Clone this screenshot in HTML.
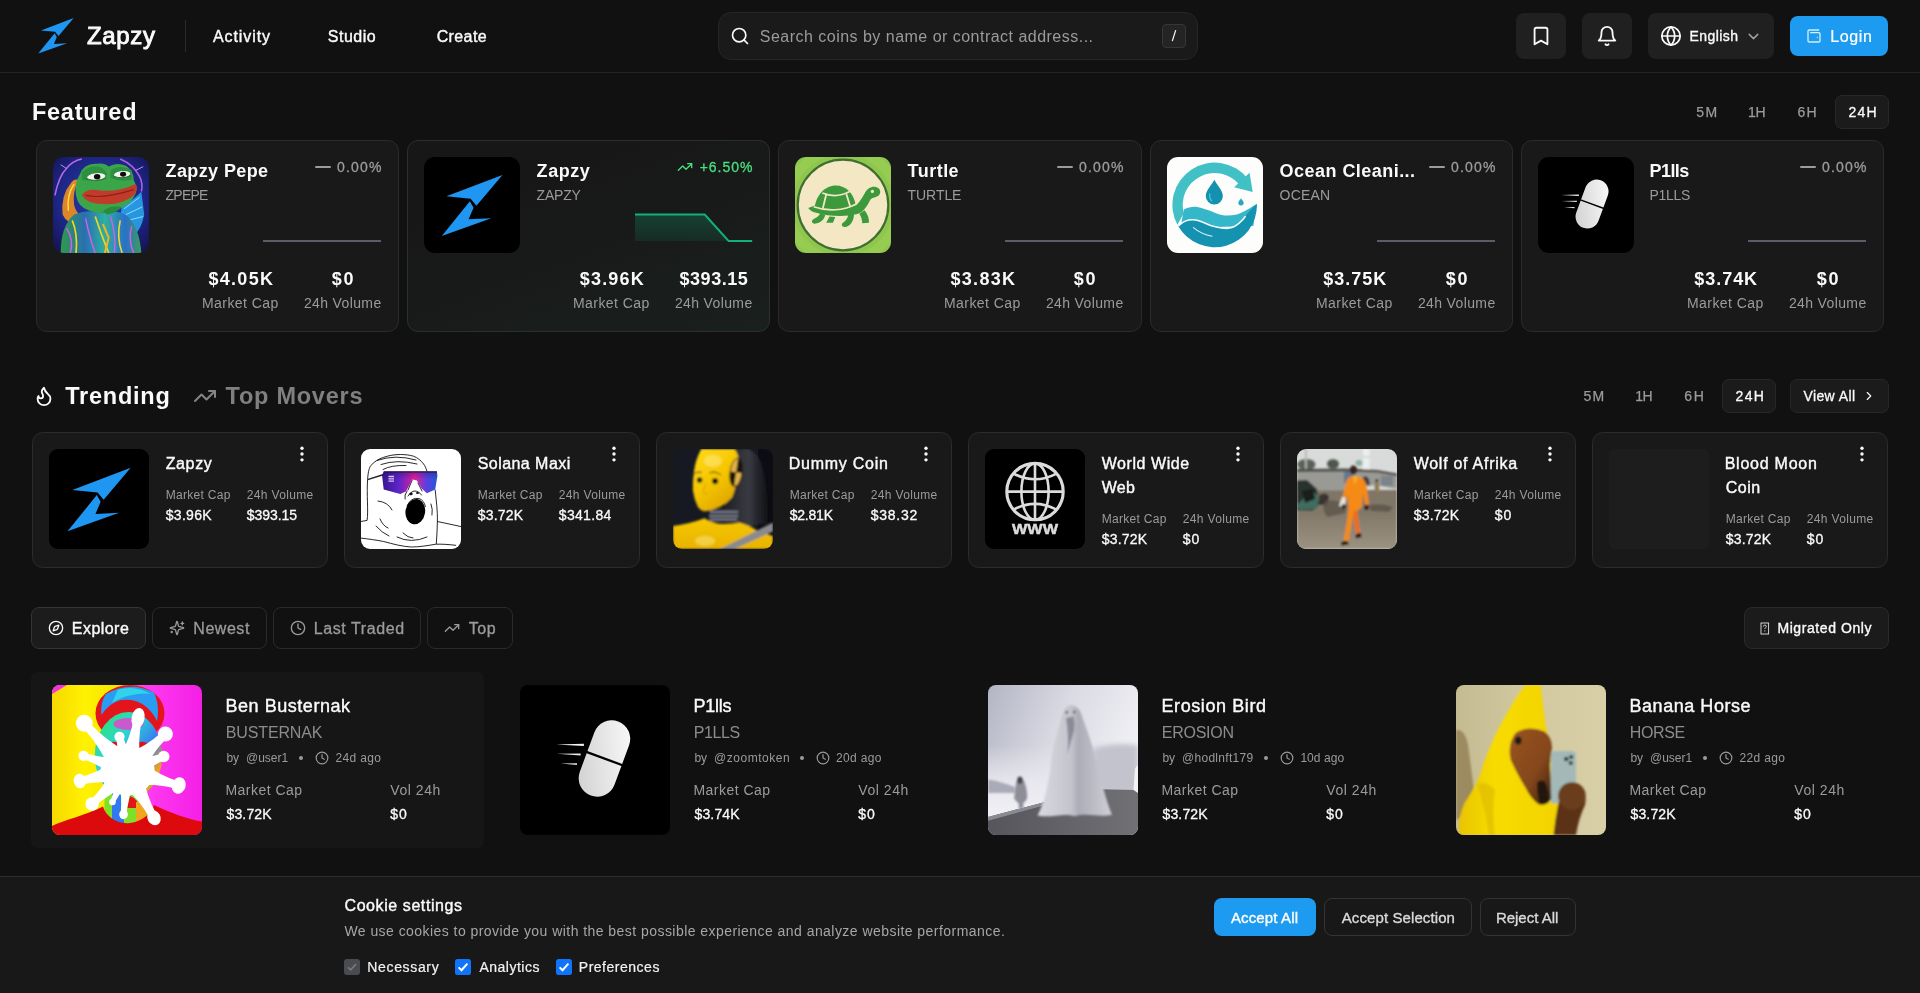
<!DOCTYPE html>
<html lang="en"><head>
<meta charset="utf-8">
<title>Zapzy</title>
<style>
*{box-sizing:border-box;margin:0;padding:0}
html,body{width:1920px;height:993px;overflow:hidden;background:#111111;color:#fafafa;will-change:transform;
  font-family:"Liberation Sans",sans-serif;-webkit-font-smoothing:antialiased}
.abs{position:absolute}
svg{display:block}
.ico{fill:none;stroke:currentColor;stroke-width:2;stroke-linecap:round;stroke-linejoin:round}
.t{position:absolute;white-space:nowrap;line-height:1}

/* ---------- header ---------- */
#hdr{position:absolute;left:0;top:0;width:1920px;height:73px;border-bottom:1px solid #232323;background:#111111}
.nav{font-size:16px;font-weight:400;color:#fafafa;-webkit-text-stroke:0.4px #fafafa}
#search{position:absolute;left:718px;top:12px;width:480px;height:48px;border-radius:13px;background:#1a1a1a;border:1px solid #262626}
#kbd{position:absolute;left:1162px;top:24px;width:24px;height:24px;border-radius:4px;background:#242424;border:1px solid #363636}
.hbtn{position:absolute;top:13px;height:46px;border-radius:8px;background:#202020}
#login{position:absolute;left:1790px;top:16px;width:98px;height:40px;border-radius:8px;background:#1d9bf0}

/* ---------- generic ---------- */
.card{position:absolute;background:#191919;border:1px solid #2b2b2b;border-radius:13px}
.muted{color:#9b9b9b}
.seg{font-size:14px;color:#9b9b9b;-webkit-text-stroke:0.25px #9b9b9b}
.segon{position:absolute;background:#1b1b1b;border:1px solid #272727;border-radius:7px}
</style>
</head>
<body>

<!-- ================= HEADER ================= -->
<svg width="0" height="0" style="position:absolute">
  <defs>
    <symbol id="bolt" viewBox="0 0 40 40">
      <polygon points="37.7,2 4.9,14.4 19.1,15.8 22.5,19.9" fill="#1e96f2"></polygon>
      <polygon points="18.65,17.3 2.2,37.6 31.2,27.2 17.9,27.9 20.8,21.1" fill="#1e96f2"></polygon>
    </symbol>
    <symbol id="clock" viewBox="0 0 24 24"><circle cx="12" cy="12" r="10"></circle><polyline points="12 6 12 12 16 14"></polyline></symbol>
    <symbol id="trend" viewBox="0 0 24 24"><polyline points="22 7 13.5 15.5 8.5 10.5 2 17"></polyline><polyline points="16 7 22 7 22 13"></polyline></symbol>
    <symbol id="dots" viewBox="0 0 24 24"><circle cx="12" cy="5" r="2.05" fill="currentColor" stroke="none"></circle><circle cx="12" cy="12" r="2.05" fill="currentColor" stroke="none"></circle><circle cx="12" cy="19" r="2.05" fill="currentColor" stroke="none"></circle></symbol>
    <linearGradient id="g-pill" x1="1" y1="0" x2="0" y2="1"><stop offset="0" stop-color="#fbfbfb"></stop><stop offset="1" stop-color="#cfcfcf"></stop></linearGradient>
    <linearGradient id="g-glass" x1="0" y1="0" x2="1" y2="0"><stop offset="0" stop-color="#3a1590"></stop><stop offset="0.3" stop-color="#5b25c8"></stop><stop offset="0.6" stop-color="#e0219f"></stop><stop offset="0.8" stop-color="#5a3fe0"></stop><stop offset="1" stop-color="#2458d8"></stop></linearGradient>
    <linearGradient id="g-glassv" x1="0" y1="0" x2="0" y2="1"><stop offset="0" stop-color="#15083a" stop-opacity="0.3"></stop><stop offset="0.35" stop-color="#15083a" stop-opacity="0"></stop></linearGradient>

    <symbol id="th-bolt" viewBox="0 0 100 100"><rect width="100" height="100" fill="#000"></rect><g transform="translate(14.6 15.3) scale(1.78)"><polygon points="37.7,2 4.9,14.4 19.1,15.8 22.5,19.9" fill="#1e96f2"></polygon><polygon points="18.65,17.3 2.2,37.6 31.2,27.2 17.9,27.9 20.8,21.1" fill="#1e96f2"></polygon></g></symbol>

    <symbol id="th-pills" viewBox="0 0 100 100"><rect width="100" height="100" fill="#000"></rect>
      <g transform="rotate(20.2 56.3 49)"><rect x="43.95" y="22.65" width="24.7" height="52.7" rx="12.35" fill="url(#g-pill)"></rect><rect x="42" y="48.3" width="29" height="1.5" fill="#000"></rect></g>
      <path d="M24.100 39.700L42.600 39.100L42.600 40.600Z" fill="#f4f4f4"></path><path d="M24.400 45.900L40.400 45.600L40.400 47Z" fill="#eaeaea"></path><path d="M27.100 52.300L38 52.100L38 53.400Z" fill="#e0e0e0"></path>
    </symbol>

    <symbol id="th-www" viewBox="0 0 100 100"><rect width="100" height="100" fill="#000"></rect>
      <g fill="none" stroke="#dcdcdc" stroke-width="3.100">
        <circle cx="50" cy="42.600" r="28.200"></circle><ellipse cx="50" cy="42.600" rx="13.600" ry="28.200" stroke-width="2.600"></ellipse>
        <path d="M50 14.400V70.800M21.800 42.600H78.200" stroke-width="2.600"></path>
        <path d="M29 24.800Q50 35.800 71 24.800M29 60.400Q50 49.400 71 60.400" stroke-width="2.600"></path>
      </g>
      <text x="50" y="85.300" text-anchor="middle" font-family="Liberation Sans, sans-serif" font-weight="700" font-size="14.800" fill="#dcdcdc" stroke="#dcdcdc" stroke-width="0.500" textLength="46" lengthAdjust="spacingAndGlyphs">WWW</text>
    </symbol>

    <symbol id="th-ocean" viewBox="0 0 100 100"><rect width="100" height="100" fill="#fdfdfc"></rect>
      <path d="M10.850 70.660A44 44 0 0 1 84.400 22.900L75.900 29.500A33.300 33.300 0 0 0 17.500 58.600Z" fill="#41c1c6"></path>
      <path d="M86 16.500L89.300 36.500L69.900 31.500Z" fill="#41c1c6"></path>
      <path d="M17.600 54.800C22 52 27 51.500 31.500 52C36 52.800 40.500 54.500 44.800 56C49 57.800 53 59.600 57 60.400C62 61.300 67.500 61 72.600 59.800C76.500 58.800 80.500 56.800 83.800 54.800C87 53 90.500 50.500 93.200 49.300L90 72L14 74Z" fill="#36b6c9"></path>
      <path d="M11.600 72C16 68 21.500 65.200 27 65.400C32 65.600 36.500 67.500 41 69.500C44 70.800 47 72 50.400 72.600C55 73.800 59.500 74.600 63.700 74.300C69 73.800 74 70.800 78.200 66C82 61.500 87 54.500 93.200 49.300L93.700 49A44 44 0 0 1 11.600 72Z" fill="#1692b1"></path>
      <path d="M12.500 71.300C16.500 67.500 21.500 65.200 27 65.400C32 65.600 36.500 67.500 41 69.500C44 70.800 47 72 50.400 72.600C55 73.800 59.500 74.600 63.700 74.300C69 73.800 74 70.800 78.200 66C79.300 64.800 80.400 63.500 81.500 62" fill="none" stroke="#f2fbfc" stroke-width="1.600" stroke-linecap="round"></path>
      <path d="M27.500 73.500Q36 80.500 47 82.500" fill="none" stroke="#d8f3f6" stroke-width="1.100" stroke-linecap="round"></path>
      <path d="M49.300 23.700C52 29 58.200 35 58.200 40.600A8.900 8.900 0 0 1 40.400 40.600C40.400 35 46.600 29 49.300 23.700Z" fill="#1391ae"></path>
      <path d="M44.500 38.500Q44 43.500 46.500 45.500" fill="none" stroke="#45c3d3" stroke-width="1.400" stroke-linecap="round"></path>
      <path d="M77.100 43C78 44.800 79.900 46.200 79.900 47.600A2.800 2.800 0 0 1 74.300 47.600C74.300 46.200 76.200 44.800 77.100 43Z" fill="#2ba8bc"></path>
    </symbol>

    <symbol id="th-turtle" viewBox="0 0 100 100"><rect width="100" height="100" fill="#8fc64d"></rect>
      <circle cx="50" cy="50" r="58" fill="none" stroke="#9dd058" stroke-width="10" opacity="0.600"></circle>
      <circle cx="50" cy="50" r="47.200" fill="#f3e7c4" stroke="#3f6e31" stroke-width="2.300"></circle>
      <g fill="#3c9a3c">
        <path d="M20.500 52.600C22 40 31 29.800 42.600 29.800C53 29.800 61 38 63 49.300C50 56 34 56.500 20.500 52.600Z"></path>
        <path d="M13.700 53.200L21 50.500C35 56 52 55.500 64 50C68 46 70 42 72.500 38C75 33 80 30 85 31.500C89.500 33 90 38 86.500 40.500C83 42.500 80 42 78.500 44.500C75.500 50 72 57 65 59.500C52 62.500 35 62 22 58C18 57.500 15.500 55.500 13.700 53.200Z"></path>
        <path d="M26.500 58.500L31.500 60.500C30.500 65 27 69 20.500 69.500C17 69 17 66 19.500 64.500C23 63 25 61 26.500 58.500Z"></path>
        <path d="M36 62L42 62.500L39.500 68.500L32.500 68.500Z"></path>
        <path d="M55.500 60L61.500 58.500C61.500 66 58 72.500 51.500 73C48.500 72.500 48 70 50 68.500C53.500 66.500 55 63.500 55.500 60Z"></path>
        <path d="M67 59L72.500 55.500C75.500 59.500 77.500 64 77 68.500L70 69C70 65.500 69 62 67 59Z"></path>
      </g>
      <g fill="none" stroke="#f3e7c4" stroke-width="1.900">
        <path d="M28.500 37.500Q42.600 43.500 57 36"></path><path d="M32.500 39L29 53.500M53.500 38.500L57.500 51.500"></path><path d="M19.500 51.800C33 56.800 51 56.300 63.600 48.800" stroke-width="1.700"></path>
      </g>
      <circle cx="80.600" cy="35.900" r="1.700" fill="#f3e7c4"></circle>
    </symbol>

    <symbol id="th-wojak" viewBox="0 0 100 100"><rect width="100" height="100" fill="#fff"></rect>
      <g fill="none" stroke="#111" stroke-width="0.900" stroke-linecap="round" stroke-linejoin="round">
        <path d="M0 72.500L6.100 71.400C7.500 62 5.500 45 6.600 30.500C7 24 8 19.500 9.400 17.200C13 12.500 17.500 10 22.700 8.300C28 6.500 33.500 5.500 39.300 5.500C44 5.500 48.500 6 52.600 7.200C56.500 8.800 60 11.500 62.600 15C64 17 65 19 65.900 22"></path>
        <path d="M74.200 41C75 50 76.800 62 76.400 72.500C76.300 80 75.800 88 75.300 94.700"></path>
        <path d="M76.400 72.500L99.700 77.500"></path>
        <path d="M0 89.100C8 90 15 91 22.700 92.500C32 95 41 97.500 50.400 98C59 98 67 96.500 74.800 95.200C82 95 88 95.500 94.700 96.300"></path>
        <path d="M16 11.500Q34 5 55 11M20 15.500Q36 10 56 15M22 20.500Q30 16 45 16.500"></path>
        <path d="M17 52Q27 53 31 61M19 70Q22 77 27 79M15 77Q21 84 28 87"></path>
        <path d="M36 88Q50 95 66 88M42 84Q47 89 52 89"></path>
        <path d="M70 55Q72 60 71 66"></path>
        <path d="M47 47Q49 43 53 42Q58 42 60.500 46M44 50Q43 46 46 42"></path>
        <path d="M51 31.500L47 41M57 34L61 42"></path>
      </g>
      <ellipse cx="50" cy="45" rx="1.800" ry="1.200" fill="#111" transform="rotate(-20 50 45)"></ellipse><ellipse cx="56.500" cy="44" rx="1.500" ry="1.100" fill="#111"></ellipse>
      <path d="M6.600 30.700L22.700 25.500" stroke="#222" stroke-width="1.400" fill="none"></path>
      <path d="M21 26L22.700 22.700L75.900 22.700L76.400 27.100L74.200 40.400L65.900 44.300L60.400 39.300L55.900 31.600L51.500 30.500L44.900 42.600L39.300 44.900L22.700 40.400Z" fill="url(#g-glass)"></path>
      <path d="M21 26L22.700 22.700L75.900 22.700L76.400 27.100L74.200 40.400L65.900 44.300L60.400 39.300L55.900 31.600L51.500 30.500L44.900 42.600L39.300 44.900L22.700 40.400Z" fill="url(#g-glassv)"></path>
      <path d="M22.700 22.900L75.900 22.900" stroke="#241046" stroke-width="1.100"></path>
      <path d="M27.500 27.500h5.500M27.500 29.800h5.500M27.500 32.100h5.500" stroke="#d7c6f3" stroke-width="1.300"></path>
      <ellipse cx="54.300" cy="62.600" rx="9.800" ry="12.700" fill="#000" transform="rotate(8 54.300 62.600)"></ellipse>
      <path d="M46 57Q50 48 58 49.500Q63 51 64.500 58" fill="none" stroke="#111" stroke-width="0.900"></path>
    </symbol>

    <symbol id="th-blank" viewBox="0 0 100 100"><rect width="100" height="100" fill="#1d1d1d"></rect></symbol>

    <filter id="b1" x="-10%" y="-10%" width="120%" height="120%"><feGaussianBlur stdDeviation="0.8"></feGaussianBlur></filter>
    <filter id="b2" x="-10%" y="-10%" width="120%" height="120%"><feGaussianBlur stdDeviation="1.6"></feGaussianBlur></filter>
    <filter id="b3" x="-20%" y="-20%" width="140%" height="140%"><feGaussianBlur stdDeviation="3"></feGaussianBlur></filter>

    <linearGradient id="g-benbg" x1="0" y1="0" x2="1" y2="0"><stop offset="0" stop-color="#f7d800"></stop><stop offset="0.22" stop-color="#fff200"></stop><stop offset="0.42" stop-color="#f6e400"></stop><stop offset="0.62" stop-color="#ff3cf0"></stop><stop offset="1" stop-color="#f41fe6"></stop></linearGradient>
    <linearGradient id="g-face" x1="0" y1="0" x2="1" y2="1"><stop offset="0" stop-color="#2ce65a"></stop><stop offset="0.35" stop-color="#2bd6d0"></stop><stop offset="0.6" stop-color="#3a7cf0"></stop><stop offset="0.8" stop-color="#f0a020"></stop><stop offset="1" stop-color="#30e050"></stop></linearGradient>
    <symbol id="th-ben" viewBox="0 0 100 100"><rect width="100" height="100" fill="url(#g-benbg)"></rect>
      <path d="M0 0H10L0 6Z" fill="#f62fe8"></path>
      <ellipse cx="52" cy="19" rx="23" ry="19" fill="#e4141c"></ellipse>
      <path d="M36 6Q52 -3 68 5Q72 14 70 24Q62 8 46 10Q38 12 33 20Q32 12 36 6Z" fill="#2a9cf2"></path>
      <path d="M44 3Q56 0 66 6Q60 5 52 7Q46 8 40 12Z" fill="#2fd4ea"></path>
      <ellipse cx="51" cy="47" rx="22.500" ry="29" fill="url(#g-face)"></ellipse>
      <ellipse cx="41" cy="40" rx="4" ry="2.200" fill="#d8141c"></ellipse><ellipse cx="60" cy="40" rx="4" ry="2.200" fill="#d8141c"></ellipse>
      <ellipse cx="51" cy="26" rx="10" ry="4" fill="#f23ad0" opacity="0.800"></ellipse>
      <rect x="35" y="70" width="30" height="24" rx="8" fill="#7fe02a"></rect>
      <path d="M40 72h8v20h-8z" fill="#2f7af0"></path><path d="M52 74Q58 76 57 82L50 82Z" fill="#e3141c"></path><path d="M56 78h7v14h-7z" fill="#f2a61e"></path>
      <path d="M0 94C8 90 22 87 34 81C36 88 44 93 52 92C60 91 66 86 68 80C78 85 92 90 100 91V100H0Z" fill="#dc0a0c"></path>
      <g fill="#fff">
        <ellipse cx="50.4" cy="56.8" rx="18" ry="16.800"></ellipse>
        <path d="M48.4 43.6Q36.3 37.2 25.4 25.7L21.4 29.4Q31.9 41.2 37.4 53.8Z"></path>
        <circle cx="21.5" cy="25.5" r="5.6"></circle>
        <path d="M58.5 47.2Q57.4 36.7 59.5 24.6L54.4 23.6Q51.7 35.6 46.7 44.8Z"></path>
        <ellipse cx="57.4" cy="22.0" rx="4.3" ry="6.8" transform="rotate(11 57.4 22.0)"></ellipse>
        <path d="M52.2 45.0Q49.4 41.0 47.7 35.6L43.1 36.7Q44.1 42.3 43.4 47.2Z"></path>
        <circle cx="45.0" cy="34.5" r="3.4"></circle>
        <path d="M63.2 54.3Q67.4 44.7 75.7 36.4L71.9 32.5Q63.2 40.4 53.5 44.1Z"></path>
        <circle cx="75.6" cy="32.7" r="5.0"></circle>
        <path d="M62.6 58.1Q67.1 53.4 73.6 50.6L71.9 46.1Q65.2 48.3 58.7 47.8Z"></path>
        <circle cx="74.5" cy="47.7" r="3.8"></circle>
        <path d="M58.9 66.7Q69.7 65.7 81.5 68.9L83.1 63.8Q71.4 60.0 62.9 53.2Z"></path>
        <ellipse cx="84.5" cy="67.0" rx="5.6" ry="4.6" transform="rotate(107 84.5 67.0)"></ellipse>
        <path d="M41.7 48.2Q32.9 48.5 23.3 45.6L21.9 49.8Q31.4 53.2 38.2 58.6Z"></path>
        <circle cx="21.0" cy="47.2" r="3.4"></circle>
        <path d="M38.2 52.9Q30.4 58.4 19.9 61.1L21.0 66.0Q31.6 63.9 41.1 65.6Z"></path>
        <ellipse cx="18.5" cy="64.0" rx="4.8" ry="4.0" transform="rotate(257 18.5 64.0)"></ellipse>
        <path d="M38.0 59.7Q34.1 68.3 26.5 76.0L30.1 79.7Q38.1 72.5 46.9 69.1Z"></path>
        <circle cx="26.7" cy="79.4" r="4.5"></circle>
        <path d="M45.4 67.4Q46.5 75.2 45.9 84.7L49.7 85.0Q50.9 75.7 53.4 68.1Z"></path>
        <ellipse cx="47.7" cy="86.3" rx="2.9" ry="3.2" transform="rotate(185 47.7 86.3)"></ellipse>
        <path d="M50.1 69.6Q58.3 76.9 64.7 87.9L69.2 85.4Q63.3 74.1 61.4 63.3Z"></path>
        <ellipse cx="68.0" cy="88.5" rx="4.3" ry="5.2" transform="rotate(151 68.0 88.5)"></ellipse>
        <path d="M42.5 65.2Q41.8 70.5 39.3 76.3L42.2 77.7Q45.2 72.2 48.8 68.2Z"></path>
        <circle cx="40.3" cy="78.0" r="2.2"></circle>
      </g>
    </symbol>

    <linearGradient id="g-sky" x1="0" y1="0" x2="1" y2="0.4"><stop offset="0" stop-color="#b4b5c4"></stop><stop offset="0.5" stop-color="#d9dae3"></stop><stop offset="1" stop-color="#f1f1f5"></stop></linearGradient>
    <linearGradient id="g-fog" x1="0" y1="0" x2="0" y2="1"><stop offset="0" stop-color="#e9e9ef" stop-opacity="0"></stop><stop offset="0.5" stop-color="#e9e9ef" stop-opacity="0.9"></stop><stop offset="1" stop-color="#f2f2f6"></stop></linearGradient>
    <linearGradient id="g-ground" x1="0" y1="0" x2="1" y2="0"><stop offset="0" stop-color="#55555b"></stop><stop offset="1" stop-color="#707075"></stop></linearGradient>
    <linearGradient id="g-ghost" x1="0" y1="0" x2="1" y2="0"><stop offset="0" stop-color="#d9d9e0"></stop><stop offset="0.45" stop-color="#c4c4cd"></stop><stop offset="0.55" stop-color="#adadb9"></stop><stop offset="1" stop-color="#cfcfd7"></stop></linearGradient>
    <symbol id="th-bird" viewBox="0 0 100 100"><rect width="100" height="100" fill="url(#g-sky)"></rect>
      <rect y="40" width="100" height="50" fill="url(#g-fog)"></rect>
      <path d="M70 42Q85 38 100 40V72H72Z" fill="#c3c3ce" filter="url(#b2)"></path>
      <path d="M0 63Q8 64 18 68L18 72L0 72Z" fill="#a9abb8" filter="url(#b1)"></path>
      <path d="M0 88L38 78L40 86L75 69.500L100 70V100H0Z" fill="url(#g-ground)"></path>
      <path d="M0 88L38 78L38.500 80L0 90.500Z" fill="#8a8a92"></path>
      <g filter="url(#b1)">
        <path d="M55.200 13.500C60 13.500 62 18 63.500 23C67 33 72 46 74 58C77 70 80 80 82.600 86.500C74 88.500 66 85 58 87.500C50 85 42 89 33 87C37 80 39 70 41 60C42 47 45 35 48 25C49.500 19 51 13.500 55.200 13.500Z" fill="url(#g-ghost)"></path>
        <path d="M52 22Q54 34 53 46Q55 38 57.500 30Q58 25 57 21Z" fill="#8b8b98"></path>
        <circle cx="52.500" cy="18.200" r="0.900" fill="#4c4c55"></circle><circle cx="57.500" cy="18" r="0.900" fill="#4c4c55"></circle>
      </g>
      <g filter="url(#b1)"><path d="M19 64Q22 61 24 64Q26.500 70 26 76L23.500 79V82.500H20.500V79L17.500 76Q17.500 70 19 64Z" fill="#8e8e99"></path><ellipse cx="21.300" cy="63.500" rx="1.800" ry="2.500" fill="#45454d"></ellipse></g>
      <path d="M98 56L100 53V72L97 70Z" fill="#f3f3f6"></path>
    </symbol>

    <linearGradient id="g-wall" x1="0" y1="0" x2="1" y2="0"><stop offset="0" stop-color="#c5bb92"></stop><stop offset="0.5" stop-color="#d3c9a1"></stop><stop offset="1" stop-color="#d9cfa6"></stop></linearGradient>
    <linearGradient id="g-ban" x1="0" y1="0" x2="1" y2="0"><stop offset="0" stop-color="#e8c400"></stop><stop offset="0.35" stop-color="#f8dc06"></stop><stop offset="1" stop-color="#f2d200"></stop></linearGradient>
    <linearGradient id="g-horse" x1="0" y1="0" x2="1" y2="1"><stop offset="0" stop-color="#9a5522"></stop><stop offset="0.6" stop-color="#84461b"></stop><stop offset="1" stop-color="#3a2212"></stop></linearGradient>
    <symbol id="th-banana" viewBox="0 0 100 100"><rect width="100" height="100" fill="url(#g-wall)"></rect>
      <path d="M0 30Q6 29 8 40L12 70L4 88L0 90Z" fill="#9c8a60" filter="url(#b1)"></path>
      <g filter="url(#b1)">
      <path d="M46 0H56.500Q58 14 60 29Q66 50 67 70L70 84L66.500 100H2Q1 88 6 78Q13 68 16 60Q20 46 28 30Q36 14 46 0Z" fill="url(#g-ban)"></path>
      <path d="M14 66Q22 64 26 70Q24 84 26 100H22Q20 84 14 66Z" fill="#d9b400" opacity="0.550"></path>
      <path d="M63.300 45.500h16.700v33.500h-16.700z" fill="#9fb4b2"></path>
      <path d="M63.300 47a3 3 0 0 1 3-3h10.700a3 3 0 0 1 3 3v31h-16.700z" fill="#a3b9b7"></path>
      <circle cx="73.500" cy="49.300" r="1.500" fill="#2c3432"></circle><circle cx="76.800" cy="48" r="1.400" fill="#2c3432"></circle><circle cx="76.500" cy="52" r="1.400" fill="#2c3432"></circle>
      <path d="M39.700 32Q48 26.500 59 31Q64 35 64 42Q62 50 63 60L63.500 76Q60 81 55 79.500Q50 76 46 68Q40 58 36.500 50Q34 40 39.700 32Z" fill="url(#g-horse)"></path>
      <ellipse cx="41.500" cy="37" rx="2.300" ry="2.600" fill="#1c1a14"></ellipse>
      <path d="M54 65Q58 62 60 66Q62 72 62 78Q58 81 55.500 78Q54 72 54 65Z" fill="#22150c"></path>
      <path d="M68 80Q72 66 80 68Q88 72 86 80Q82 88 80 100H65Q66 90 68 80Z" fill="#5b3117"></path>
      <circle cx="77.300" cy="74" r="9.200" fill="#6a3c1d"></circle>
      </g>
    </symbol>

    <linearGradient id="g-dum" x1="0.2" y1="0" x2="0.8" y2="1"><stop offset="0" stop-color="#ffd814"></stop><stop offset="0.5" stop-color="#f4c400"></stop><stop offset="1" stop-color="#d89e00"></stop></linearGradient>
    <linearGradient id="g-dum2" x1="0" y1="0" x2="0" y2="1"><stop offset="0" stop-color="#f6c800"></stop><stop offset="1" stop-color="#e9b200"></stop></linearGradient>
    <linearGradient id="g-rest" x1="0" y1="0" x2="1" y2="0"><stop offset="0" stop-color="#1f2025"></stop><stop offset="0.55" stop-color="#3a3b42"></stop><stop offset="0.7" stop-color="#2a2b31"></stop><stop offset="1" stop-color="#101116"></stop></linearGradient>
    <symbol id="th-dummy" viewBox="0 0 100 100"><rect width="100" height="100" fill="#161922"></rect>
      <rect x="85" width="15" height="100" fill="#0c0d12"></rect>
      <g filter="url(#b1)">
      <path d="M57 0H76Q84 4 88 14Q93 28 94 46L95 74L70 78L52 60Z" fill="url(#g-rest)"></path>
      <path d="M36 60h30v13H36z" fill="#30333d"></path><path d="M37 63h28M36 67h29M37 70.500h27" stroke="#8a8e9c" stroke-width="1.300" fill="none"></path>
      <path d="M28.200 0H61.500Q66 6 67 17Q66 28 62.600 37Q61 44 59.200 48.200Q54 54 47 58.100Q39 61.500 31.600 62.600Q27 61.500 24.900 58.100Q21 50 19.900 41.500Q19.500 32 21 22.700Q22 12 28.200 0Z" fill="url(#g-dum)"></path>
      <ellipse cx="40" cy="12" rx="9" ry="6" fill="#fff0a0" opacity="0.450"></ellipse>
      <ellipse cx="63.100" cy="23.300" rx="6" ry="14.400" fill="#e5b44c" transform="rotate(8 63.100 23.300)"></ellipse>
      <path d="M63.100 23.300V8.900A6 14.400 0 0 1 69.100 23.300ZM63.100 23.300V37.700A6 14.400 0 0 1 57.100 23.300Z" fill="#14120e" transform="rotate(8 63.100 23.300)"></path>
      <ellipse cx="63.100" cy="23.300" rx="6" ry="14.400" fill="none" stroke="#1a160e" stroke-width="0.900" transform="rotate(8 63.100 23.300)"></ellipse>
      <circle cx="26.600" cy="31" r="2.800" fill="#17130a"></circle><circle cx="42.100" cy="32.100" r="3.100" fill="#17130a"></circle>
      <path d="M21.500 24.500Q25 22 29 23.500M36.500 24Q42 21.500 48 26" stroke="#3a2c08" stroke-width="1" fill="none"></path>
      <path d="M33 34L30 43Q32 46 36 44" stroke="#d9a800" stroke-width="1.200" fill="none"></path>
      <path d="M0 77Q16 75 31.600 69.200Q40 75 50 75Q60 75 65.900 73.600Q76 76 83.600 81.400L100 87V100H0Z" fill="url(#g-dum2)"></path>
      <ellipse cx="32" cy="92" rx="10" ry="5" fill="#fff2a8" opacity="0.400"></ellipse>
      <path d="M100 73.600V82.500L61.500 100H47Z" fill="#8a8a8f"></path>
      </g>
    </symbol>

    <linearGradient id="g-wgr" x1="0" y1="0" x2="0" y2="1"><stop offset="0" stop-color="#7e7566"></stop><stop offset="0.4" stop-color="#83796a"></stop><stop offset="1" stop-color="#9b9281"></stop></linearGradient>
    <symbol id="th-wolf" viewBox="0 0 100 100"><rect width="100" height="100" fill="#d8dbd9"></rect>
      <g filter="url(#b1)">
      <rect y="41" width="100" height="59" fill="url(#g-wgr)"></rect>
      <ellipse cx="9.500" cy="15.500" rx="9" ry="5.500" fill="#5a6259"></ellipse><ellipse cx="36" cy="15" rx="6" ry="4.800" fill="#4f574f"></ellipse>
      <rect x="8" y="0" width="1.800" height="30" fill="#b7b8b4"></rect>
      <path d="M65.900 0h6.600v20h-6.600z" fill="#eceeed"></path><path d="M64.500 7h9.500v1.500h-9.500z" fill="#cfd2d0"></path>
      <path d="M0 21.500L48 20.500L78 21.500L100 25V40L78 36L48 41.500H0Z" fill="#9a9a95"></path>
      <path d="M0 20L48 19.500L80 21L100 24.500V27L80 23.500L48 22.500L0 23Z" fill="#4f4e4a"></path>
      <path d="M47 22h9v12h-9z" fill="#506a8a" opacity="0.700"></path>
      <ellipse cx="62" cy="14" rx="3.500" ry="3" fill="#8fb09f"></ellipse>
      <path d="M66 28Q70 26 72 30L73 36H67Z" fill="#3d3f44"></path>
      <path d="M0 31.600L10 31L20 40L22 55L16 61.500H0Z" fill="#2a302d"></path><path d="M12 44Q20 42 21.600 50L20 60L2 61L0 56Z" fill="#3f6d5d"></path><path d="M5 42L16 40L18 50L8 54Z" fill="#1b1f1e"></path>
      <path d="M22 46Q30 42 32 48L30 56L22 56Z" fill="#3a3330"></path>
      <path d="M28 52Q40 50 50 56L48 64L30 68Q24 60 28 52Z" fill="#5d554a" opacity="0.800"></path>
      <path d="M72 56Q86 54 96 58L92 63L74 62Z" fill="#5a5248" opacity="0.800"></path>
      <path d="M78 33Q81 32 82 36L82.500 44L80 45L77.500 40Z" fill="#8b7d4e"></path><circle cx="79.800" cy="31.500" r="1.600" fill="#3a2a20"></circle>
      <path d="M84 27h12v10h-12z" fill="#6d7a86" opacity="0.700"></path>
      <path d="M52 28.500Q58 25.500 64 28.500Q69 31 70 40L72 55L68.500 57L66 45L65 58L60 62L63 84L59.500 86L56 66L54 80L51 93L46.500 92L50 72L51.500 58L50 46L47 55L44 54L48 38Q49 31 52 28.500Z" fill="#f58a18"></path>
      <path d="M55.500 27.500L58 36L61 27.500Z" fill="#f7b020"></path>
      <path d="M56 62L60 62L63 84L59.500 86Z" fill="#f26a12"></path>
      <path d="M45 48L49 49L48 58L42 57Z" fill="#e9e4da"></path>
      <ellipse cx="56.500" cy="21" rx="3.700" ry="4.600" fill="#38221e"></ellipse>
      <ellipse cx="69.500" cy="58.500" rx="2.400" ry="2.800" fill="#2a1c18"></ellipse><ellipse cx="46.500" cy="57.500" rx="1.800" ry="2.400" fill="#2a1c18"></ellipse>
      <path d="M44 94Q46 91 51 92.500L51.500 95.500L44.500 96.500Z" fill="#15130f"></path><path d="M58.500 86Q61 83.500 64 84.500L64.500 88L59 89.500Z" fill="#15130f"></path>
      </g>
    </symbol>

    <radialGradient id="g-pbg" cx="0.5" cy="0.45" r="0.75"><stop offset="0" stop-color="#2a3cb0"></stop><stop offset="0.6" stop-color="#1d2684"></stop><stop offset="1" stop-color="#140f4a"></stop></radialGradient>
    <linearGradient id="g-pbody" x1="0" y1="0" x2="1" y2="0"><stop offset="0" stop-color="#2e9a48"></stop><stop offset="0.3" stop-color="#2a6fb2"></stop><stop offset="0.55" stop-color="#2fb0a0"></stop><stop offset="0.8" stop-color="#2a70c8"></stop><stop offset="1" stop-color="#3aa058"></stop></linearGradient>
    <symbol id="th-pepe" viewBox="0 0 100 100"><rect width="100" height="100" fill="url(#g-pbg)"></rect>
      <g filter="url(#b1)">
      <path d="M2 40Q6 20 14 12Q20 4 30 2" stroke="#b868e8" stroke-width="1.600" fill="none"></path><path d="M70 2Q84 8 90 20Q94 28 92 36" stroke="#b060e0" stroke-width="1.600" fill="none"></path><path d="M14 12L8 8M86 14L94 10" stroke="#c890f0" stroke-width="1" fill="none"></path>
      <path d="M10 60Q8 40 18 28Q22 22 27 24Q20 36 22 50Q24 60 34 64L28 70Q14 70 10 60Z" fill="#f0901e" opacity="0.900"></path>
      <path d="M16 56Q14 40 22 28" stroke="#ffe040" stroke-width="1.500" fill="none"></path>
      <path d="M72 50Q86 44 92 36L95 60Q92 76 84 82L70 62Z" fill="#2aa8ee" opacity="0.850"></path>
      <path d="M74 54L90 42M76 60L93 52M78 66L94 62" stroke="#8ae0ff" stroke-width="1" fill="none"></path>
      <path d="M8 100Q8 72 22 60Q36 54 52 58Q68 54 78 62Q90 74 92 100Z" fill="url(#g-pbody)"></path>
      <path d="M20 66Q26 80 24 100M44 62Q50 80 58 100M70 66Q66 84 72 100" stroke="#f2d820" stroke-width="1.700" fill="none"></path>
      <path d="M14 74Q22 86 18 100M34 64Q38 84 44 100M60 62Q66 82 64 100M82 72Q78 86 84 100" stroke="#d060e8" stroke-width="1.500" fill="none"></path>
      <path d="M52 70L58 84L54 100" stroke="#ffb020" stroke-width="2" fill="none"></path>
      <path d="M28 18Q32 6 46 7Q54 6 58 10Q66 5 76 9Q84 14 84 24Q90 34 84 42Q78 52 64 56Q50 60 38 56Q26 52 24 40Q22 28 28 18Z" fill="#3aa64a"></path>
      <path d="M30 16Q38 8 48 10Q56 14 56 20Q44 26 30 24Z" fill="#2f8f40"></path><path d="M60 14Q68 8 78 12Q84 18 82 24Q70 26 60 22Z" fill="#2f8f40"></path>
      <ellipse cx="45" cy="20.500" rx="9.500" ry="3.600" fill="#f4f4f0" transform="rotate(-6 45 20.500)"></ellipse><ellipse cx="72" cy="18" rx="8.500" ry="3.400" fill="#f4f4f0" transform="rotate(-6 72 18)"></ellipse>
      <ellipse cx="46" cy="20.600" rx="3.400" ry="2.800" fill="#111"></ellipse><ellipse cx="73" cy="18" rx="3.200" ry="2.600" fill="#111"></ellipse><path d="M34 20.500Q44 13 56 18.500L56 16Q44 9 33 17Z" fill="#2f8f40"></path><path d="M62.500 18Q72 11.500 82 16L82 13.500Q72 8 62 15Z" fill="#2f8f40"></path><path d="M34.500 22.500Q45 26.500 55.500 22" stroke="#246e33" stroke-width="1" fill="none"></path><path d="M63 20Q72 23.500 81 19.500" stroke="#246e33" stroke-width="1" fill="none"></path>
      <path d="M30 40Q34 32 50 35Q70 36 86 28Q90 32 84 40Q72 50 52 49Q36 49 30 40Z" fill="#c23a2c"></path>
      <path d="M34 40Q52 44 84 34" stroke="#8a2018" stroke-width="1.200" fill="none"></path>
      <path d="M52 56Q60 50 72 52Q66 58 56 60Z" fill="#2a8a3c"></path>
      </g>
    </symbol>

  </defs>
</svg>
<div id="hdr">
  <svg class="abs" style="left:36px;top:16px" width="40" height="40"><use href="#bolt"></use></svg>
  <div class="t" style="font-size: 24px; font-weight: 400; -webkit-text-stroke: 0.9px rgb(250, 250, 250); letter-spacing: 0.66px; left: 87px; top: 24px;">Zapzy</div>
  <div class="abs" style="left:185px;top:20px;width:1px;height:32px;background:#2a2a2a"></div>
  <div class="t nav" style="letter-spacing: 0.9px; left: 213px; top: 29px;">Activity</div>
  <div class="t nav" style="letter-spacing: 0.51px; left: 327.8px; top: 29px;">Studio</div>
  <div class="t nav" style="letter-spacing: 0.38px; left: 436.7px; top: 29px;">Create</div>

  <div id="search"></div>
  <svg class="abs ico" style="left:729.5px;top:26px;color:#fafafa" width="20" height="20" viewBox="0 0 24 24"><circle cx="11" cy="11" r="8"></circle><path d="m21 21-4.3-4.3"></path></svg>
  <div class="t" style="font-size: 16px; color: rgb(155, 155, 155); letter-spacing: 0.48px; left: 759.8px; top: 29px;">Search coins by name or contract address...</div>
  <div id="kbd"></div>
  <svg class="abs" style="left:1168px;top:28px" width="12" height="16" viewBox="0 0 12 16"><line x1="4.4" y1="12.6" x2="7.6" y2="2.6" stroke="#f0f0f0" stroke-width="1.3" stroke-linecap="round"></line></svg>

  <div class="hbtn" style="left:1516px;width:50px"></div>
  <svg class="abs ico" style="left:1530px;top:25px;color:#fafafa" width="22" height="22" viewBox="0 0 24 24"><path d="m19 21-7-4-7 4V5a2 2 0 0 1 2-2h10a2 2 0 0 1 2 2v16z"></path></svg>
  <div class="hbtn" style="left:1582px;width:50px"></div>
  <svg class="abs ico" style="left:1596px;top:25px;color:#fafafa" width="22" height="22" viewBox="0 0 24 24"><path d="M6 8a6 6 0 0 1 12 0c0 7 3 9 3 9H3s3-2 3-9"></path><path d="M10.3 21a1.94 1.94 0 0 0 3.4 0"></path></svg>
  <div class="hbtn" style="left:1648px;width:126px"></div>
  <svg class="abs ico" style="left:1660px;top:25px;color:#fafafa;stroke-width:1.9" width="22" height="22" viewBox="0 0 24 24"><circle cx="12" cy="12" r="10"></circle><path d="M12 2a14.5 14.5 0 0 0 0 20 14.5 14.5 0 0 0 0-20"></path><path d="M2 12h20"></path></svg>
  <div class="t" style="font-size: 14px; color: rgb(250, 250, 250); -webkit-text-stroke: 0.35px rgb(250, 250, 250); letter-spacing: 0.43px; left: 1689.6px; top: 29px;">English</div>
  <svg class="abs ico" style="left:1745.4px;top:27.5px;color:#a0a0a0;stroke-width:2" width="17" height="17" viewBox="0 0 24 24"><path d="m6 9 6 6 6-6"></path></svg>
  <div id="login"></div>
  <svg class="abs ico" style="left:1806px;top:27.8px;color:#d4efff;stroke-width:2" width="16" height="16" viewBox="0 0 24 24"><path d="M17 14h.01"></path><path d="M7 7h12a2 2 0 0 1 2 2v10a2 2 0 0 1-2 2H5a2 2 0 0 1-2-2V5a2 2 0 0 1 2-2h14"></path></svg>
  <div class="t" style="font-size: 16px; color: rgb(255, 255, 255); -webkit-text-stroke: 0.2px rgb(255, 255, 255); letter-spacing: 0.64px; left: 1830.2px; top: 29px;">Login</div>
</div>

<!-- featured -->
<div class="t" style="font-size: 23.5px; font-weight: 700; letter-spacing: 0.77px; left: 31.9px; top: 101px;">Featured</div>
<div class="segon" style="left:1835px;top:95px;width:54px;height:34px"></div>
<div class="t seg" style="letter-spacing: 1.31px; left: 1696.3px; top: 105px;">5M</div>
<div class="t seg" style="letter-spacing: -0.39px; left: 1748.1px; top: 105px;">1H</div>
<div class="t seg" style="letter-spacing: 1.11px; left: 1797.5px; top: 105px;">6H</div>
<div class="t seg" style="color: rgb(250, 250, 250); -webkit-text-stroke: 0.3px rgb(250, 250, 250); letter-spacing: 1.21px; left: 1848.4px; top: 105px;">24H</div>
<div class="card" style="left:36px;top:140px;width:363px;height:192px;border-radius:11px;"></div>
<svg class="abs" style="left:53px;top:157px;border-radius:11px;overflow:hidden" width="96" height="96" viewBox="0 0 100 100"><use href="#th-pepe"></use></svg>
<div class="t" style="font-size: 18px; font-weight: 700; letter-spacing: 0.38px; left: 165.6px; top: 162px;">Zapzy Pepe</div>
<div class="t" style="font-size: 14px; color: rgb(155, 155, 155); letter-spacing: -0.79px; left: 165.6px; top: 188px;">ZPEPE</div>
<div class="abs" style="left:314.8px;top:165.8px;width:16.2px;height:2px;border-radius:1px;background:#9b9b9b"></div>
<div class="t" style="font-size: 14px; color: rgb(155, 155, 155); -webkit-text-stroke: 0.3px rgb(155, 155, 155); letter-spacing: 1.19px; left: 337px; top: 160px;">0.00%</div>
<div class="abs" style="left:263.3px;top:239.9px;width:117.5px;height:2px;background:#5a5d68"></div>
<div class="t" style="font-size: 18px; font-weight: 700; letter-spacing: 1.25px; left: 208.6px; top: 270px;">$4.05K</div>
<div class="t" style="font-size: 18px; font-weight: 700; letter-spacing: 1.6px; left: 331.8px; top: 270px;">$0</div>
<div class="t" style="font-size: 14px; color: rgb(155, 155, 155); letter-spacing: 0.44px; left: 202px; top: 296px;">Market Cap</div>
<div class="t" style="font-size: 14px; color: rgb(155, 155, 155); letter-spacing: 0.37px; left: 303.9px; top: 296px;">24h Volume</div>
<div class="card" style="left:407px;top:140px;width:363px;height:192px;border-radius:11px;background:linear-gradient(160deg,#171717 25%,#1a201d 100%);border-color:#28302b"></div>
<svg class="abs" style="left:424px;top:157px;border-radius:11px;overflow:hidden" width="96" height="96" viewBox="0 0 100 100"><use href="#th-bolt"></use></svg>
<div class="t" style="font-size: 18px; font-weight: 700; letter-spacing: 0.57px; left: 536.6px; top: 162px;">Zapzy</div>
<div class="t" style="font-size: 14px; color: rgb(155, 155, 155); letter-spacing: -0.19px; left: 536.6px; top: 188px;">ZAPZY</div>
<svg class="abs ico" style="left:677.1px;top:159.3px;color:#4ade80" width="16" height="16" viewBox="0 0 24 24"><use href="#trend"></use></svg>
<div class="t" style="font-size: 14px; color: rgb(74, 222, 128); -webkit-text-stroke: 0.3px rgb(74, 222, 128); letter-spacing: 0.96px; left: 699.7px; top: 160px;">+6.50%</div>
<svg class="abs" style="left:634.7px;top:210px" width="120" height="36" viewBox="0 0 120 36"><defs><linearGradient id="g-spark" x1="0" y1="0" x2="0" y2="1"><stop offset="0" stop-color="#10b981" stop-opacity="0.24"></stop><stop offset="1" stop-color="#10b981" stop-opacity="0.1"></stop></linearGradient></defs><path d="M0 4.5H69.7L93.5 30.9V31H0Z" fill="url(#g-spark)"></path><path d="M0 4.5H69.7L93.5 30.9H117.2" fill="none" stroke="#12b07a" stroke-width="2" stroke-linejoin="round"></path></svg>
<div class="t" style="font-size: 18px; font-weight: 700; letter-spacing: 1.17px; left: 579.8px; top: 270px;">$3.96K</div>
<div class="t" style="font-size: 18px; font-weight: 700; letter-spacing: 0.57px; left: 679.4px; top: 270px;">$393.15</div>
<div class="t" style="font-size: 14px; color: rgb(155, 155, 155); letter-spacing: 0.44px; left: 573px; top: 296px;">Market Cap</div>
<div class="t" style="font-size: 14px; color: rgb(155, 155, 155); letter-spacing: 0.37px; left: 674.9px; top: 296px;">24h Volume</div>
<div class="card" style="left:778px;top:140px;width:364px;height:192px;border-radius:11px;"></div>
<svg class="abs" style="left:795px;top:157px;border-radius:11px;overflow:hidden" width="96" height="96" viewBox="0 0 100 100"><use href="#th-turtle"></use></svg>
<div class="t" style="font-size: 18px; font-weight: 700; letter-spacing: 0.47px; left: 907.6px; top: 162px;">Turtle</div>
<div class="t" style="font-size: 14px; color: rgb(155, 155, 155); letter-spacing: -0.07px; left: 907.6px; top: 188px;">TURTLE</div>
<div class="abs" style="left:1056.8px;top:165.8px;width:16.2px;height:2px;border-radius:1px;background:#9b9b9b"></div>
<div class="t" style="font-size: 14px; color: rgb(155, 155, 155); -webkit-text-stroke: 0.3px rgb(155, 155, 155); letter-spacing: 1.19px; left: 1079px; top: 160px;">0.00%</div>
<div class="abs" style="left:1005.3px;top:239.9px;width:117.5px;height:2px;background:#5a5d68"></div>
<div class="t" style="font-size: 18px; font-weight: 700; letter-spacing: 1.29px; left: 950.5px; top: 270px;">$3.83K</div>
<div class="t" style="font-size: 18px; font-weight: 700; letter-spacing: 1.6px; left: 1073.8px; top: 270px;">$0</div>
<div class="t" style="font-size: 14px; color: rgb(155, 155, 155); letter-spacing: 0.44px; left: 944px; top: 296px;">Market Cap</div>
<div class="t" style="font-size: 14px; color: rgb(155, 155, 155); letter-spacing: 0.37px; left: 1045.9px; top: 296px;">24h Volume</div>
<div class="card" style="left:1150px;top:140px;width:363px;height:192px;border-radius:11px;"></div>
<svg class="abs" style="left:1167px;top:157px;border-radius:11px;overflow:hidden" width="96" height="96" viewBox="0 0 100 100"><use href="#th-ocean"></use></svg>
<div class="t" style="font-size: 18px; font-weight: 700; letter-spacing: 0.46px; left: 1279.6px; top: 162px;">Ocean Cleani...</div>
<div class="t" style="font-size: 14px; color: rgb(155, 155, 155); letter-spacing: 0.21px; left: 1279.6px; top: 188px;">OCEAN</div>
<div class="abs" style="left:1428.8px;top:165.8px;width:16.2px;height:2px;border-radius:1px;background:#9b9b9b"></div>
<div class="t" style="font-size: 14px; color: rgb(155, 155, 155); -webkit-text-stroke: 0.3px rgb(155, 155, 155); letter-spacing: 1.19px; left: 1451px; top: 160px;">0.00%</div>
<div class="abs" style="left:1377.3px;top:239.9px;width:117.5px;height:2px;background:#5a5d68"></div>
<div class="t" style="font-size: 18px; font-weight: 700; letter-spacing: 0.99px; left: 1323.2px; top: 270px;">$3.75K</div>
<div class="t" style="font-size: 18px; font-weight: 700; letter-spacing: 1.6px; left: 1445.8px; top: 270px;">$0</div>
<div class="t" style="font-size: 14px; color: rgb(155, 155, 155); letter-spacing: 0.44px; left: 1316px; top: 296px;">Market Cap</div>
<div class="t" style="font-size: 14px; color: rgb(155, 155, 155); letter-spacing: 0.37px; left: 1417.9px; top: 296px;">24h Volume</div>
<div class="card" style="left:1521px;top:140px;width:363px;height:192px;border-radius:11px;"></div>
<svg class="abs" style="left:1538px;top:157px;border-radius:11px;overflow:hidden" width="96" height="96" viewBox="0 0 100 100"><use href="#th-pills"></use></svg>
<div class="t" style="font-size: 18px; font-weight: 700; letter-spacing: -0.6px; left: 1649.6px; top: 162px;">P1lls</div>
<div class="t" style="font-size: 14px; color: rgb(155, 155, 155); letter-spacing: -0.32px; left: 1649.6px; top: 188px;">P1LLS</div>
<div class="abs" style="left:1799.8px;top:165.8px;width:16.2px;height:2px;border-radius:1px;background:#9b9b9b"></div>
<div class="t" style="font-size: 14px; color: rgb(155, 155, 155); -webkit-text-stroke: 0.3px rgb(155, 155, 155); letter-spacing: 1.19px; left: 1822px; top: 160px;">0.00%</div>
<div class="abs" style="left:1748.3px;top:239.9px;width:117.5px;height:2px;background:#5a5d68"></div>
<div class="t" style="font-size: 18px; font-weight: 700; letter-spacing: 0.95px; left: 1694.3px; top: 270px;">$3.74K</div>
<div class="t" style="font-size: 18px; font-weight: 700; letter-spacing: 1.6px; left: 1816.8px; top: 270px;">$0</div>
<div class="t" style="font-size: 14px; color: rgb(155, 155, 155); letter-spacing: 0.44px; left: 1687px; top: 296px;">Market Cap</div>
<div class="t" style="font-size: 14px; color: rgb(155, 155, 155); letter-spacing: 0.37px; left: 1788.9px; top: 296px;">24h Volume</div>


<!-- trending -->
<svg class="abs ico" style="left:33px;top:385.2px;color:#fafafa;stroke-width:2" width="22" height="22" viewBox="0 0 24 24"><path d="M8.5 14.5A2.5 2.5 0 0 0 11 12c0-1.38-.5-2-1-3-1.072-2.143-.224-4.054 2-6 .5 2.5 2 4.9 4 6.500 2 1.600 3 3.500 3 5.500a7 7 0 1 1-14 0c0-1.153.433-2.294 1-3a2.500 2.500 0 0 0 2.500 2.500z"></path></svg>
<div class="t" style="font-size: 23.5px; font-weight: 700; letter-spacing: 0.75px; left: 65.3px; top: 385px;">Trending</div>
<svg class="abs ico" style="left:193.2px;top:383.8px;color:#858585" width="24" height="24" viewBox="0 0 24 24"><use href="#trend"></use></svg>
<div class="t" style="font-size: 23.5px; font-weight: 700; color: rgb(128, 128, 128); letter-spacing: 0.75px; left: 225.6px; top: 385px;">Top Movers</div>
<div class="segon" style="left:1722px;top:379px;width:54px;height:34px"></div>
<div class="segon" style="left:1790px;top:379px;width:99px;height:34px"></div>
<div class="t seg" style="letter-spacing: 1.31px; left: 1583.4px; top: 389px;">5M</div>
<div class="t seg" style="letter-spacing: -0.39px; left: 1635.2px; top: 389px;">1H</div>
<div class="t seg" style="letter-spacing: 1.6px; left: 1684.3px; top: 389px;">6H</div>
<div class="t seg" style="color: rgb(250, 250, 250); -webkit-text-stroke: 0.3px rgb(250, 250, 250); letter-spacing: 1.36px; left: 1735.5px; top: 389px;">24H</div>
<div class="t seg" style="color: rgb(250, 250, 250); -webkit-text-stroke: 0.3px rgb(250, 250, 250); letter-spacing: 0.41px; left: 1803.4px; top: 389px;">View All</div>
<svg class="abs ico" style="left:1861.8px;top:389.3px;color:#fafafa" width="14" height="14" viewBox="0 0 24 24"><path d="m9 18 6-6-6-6"></path></svg>
<div class="card" style="left:32px;top:432px;width:296px;height:136px;border-radius:11px"></div>
<svg class="abs" style="left:49px;top:449px;border-radius:9px;overflow:hidden" width="100" height="100" viewBox="0 0 100 100"><use href="#th-bolt"></use></svg>
<div class="t" style="font-size: 16px; -webkit-text-stroke: 0.4px rgb(250, 250, 250); letter-spacing: 0.63px; left: 165.7px; top: 456px;">Zapzy</div>
<div class="t" style="font-size: 12px; color: rgb(155, 155, 155); letter-spacing: 0.29px; left: 165.7px; top: 489px;">Market Cap</div>
<div class="t" style="font-size: 12px; color: rgb(155, 155, 155); letter-spacing: 0.33px; left: 246.8px; top: 489px;">24h Volume</div>
<div class="t" style="font-size: 14px; -webkit-text-stroke: 0.3px rgb(250, 250, 250); letter-spacing: 0.31px; left: 165.7px; top: 508px;">$3.96K</div>
<div class="t" style="font-size: 14px; -webkit-text-stroke: 0.3px rgb(250, 250, 250); letter-spacing: -0.05px; left: 246.8px; top: 508px;">$393.15</div>
<svg class="abs" style="left:291.8px;top:444.3px;color:#fafafa" width="20" height="20" viewBox="0 0 24 24"><use href="#dots"></use></svg>
<div class="card" style="left:344px;top:432px;width:296px;height:136px;border-radius:11px"></div>
<svg class="abs" style="left:361px;top:449px;border-radius:9px;overflow:hidden" width="100" height="100" viewBox="0 0 100 100"><use href="#th-wojak"></use></svg>
<div class="t" style="font-size: 16px; -webkit-text-stroke: 0.4px rgb(250, 250, 250); letter-spacing: 0.45px; left: 477.7px; top: 456px;">Solana Maxi</div>
<div class="t" style="font-size: 12px; color: rgb(155, 155, 155); letter-spacing: 0.29px; left: 477.7px; top: 489px;">Market Cap</div>
<div class="t" style="font-size: 12px; color: rgb(155, 155, 155); letter-spacing: 0.33px; left: 558.8px; top: 489px;">24h Volume</div>
<div class="t" style="font-size: 14px; -webkit-text-stroke: 0.3px rgb(250, 250, 250); letter-spacing: 0.19px; left: 477.7px; top: 508px;">$3.72K</div>
<div class="t" style="font-size: 14px; -webkit-text-stroke: 0.3px rgb(250, 250, 250); letter-spacing: 0.31px; left: 558.8px; top: 508px;">$341.84</div>
<svg class="abs" style="left:603.8px;top:444.3px;color:#fafafa" width="20" height="20" viewBox="0 0 24 24"><use href="#dots"></use></svg>
<div class="card" style="left:656px;top:432px;width:296px;height:136px;border-radius:11px"></div>
<svg class="abs" style="left:673px;top:449px;border-radius:9px;overflow:hidden" width="100" height="100" viewBox="0 0 100 100"><use href="#th-dummy"></use></svg>
<div class="t" style="font-size: 16px; -webkit-text-stroke: 0.4px rgb(250, 250, 250); letter-spacing: 0.76px; left: 788.7px; top: 456px;">Dummy Coin</div>
<div class="t" style="font-size: 12px; color: rgb(155, 155, 155); letter-spacing: 0.29px; left: 789.7px; top: 489px;">Market Cap</div>
<div class="t" style="font-size: 12px; color: rgb(155, 155, 155); letter-spacing: 0.33px; left: 870.8px; top: 489px;">24h Volume</div>
<div class="t" style="font-size: 14px; -webkit-text-stroke: 0.3px rgb(250, 250, 250); letter-spacing: -0.21px; left: 789.7px; top: 508px;">$2.81K</div>
<div class="t" style="font-size: 14px; -webkit-text-stroke: 0.3px rgb(250, 250, 250); letter-spacing: 0.73px; left: 870.8px; top: 508px;">$38.32</div>
<svg class="abs" style="left:915.8px;top:444.3px;color:#fafafa" width="20" height="20" viewBox="0 0 24 24"><use href="#dots"></use></svg>
<div class="card" style="left:968px;top:432px;width:296px;height:136px;border-radius:11px"></div>
<svg class="abs" style="left:985px;top:449px;border-radius:9px;overflow:hidden" width="100" height="100" viewBox="0 0 100 100"><use href="#th-www"></use></svg>
<div class="t" style="font-size: 16px; -webkit-text-stroke: 0.4px rgb(250, 250, 250); letter-spacing: 0.57px; left: 1101.7px; top: 456px;">World Wide</div>
<div class="t" style="font-size: 16px; -webkit-text-stroke: 0.4px rgb(250, 250, 250); letter-spacing: 0.29px; left: 1101.7px; top: 480px;">Web</div>
<div class="t" style="font-size: 12px; color: rgb(155, 155, 155); letter-spacing: 0.29px; left: 1101.7px; top: 513px;">Market Cap</div>
<div class="t" style="font-size: 12px; color: rgb(155, 155, 155); letter-spacing: 0.33px; left: 1182.8px; top: 513px;">24h Volume</div>
<div class="t" style="font-size: 14px; -webkit-text-stroke: 0.3px rgb(250, 250, 250); letter-spacing: 0.19px; left: 1101.7px; top: 532px;">$3.72K</div>
<div class="t" style="font-size: 14px; -webkit-text-stroke: 0.3px rgb(250, 250, 250); letter-spacing: 0.91px; left: 1182.8px; top: 532px;">$0</div>
<svg class="abs" style="left:1227.8px;top:444.3px;color:#fafafa" width="20" height="20" viewBox="0 0 24 24"><use href="#dots"></use></svg>
<div class="card" style="left:1280px;top:432px;width:296px;height:136px;border-radius:11px"></div>
<svg class="abs" style="left:1297px;top:449px;border-radius:9px;overflow:hidden" width="100" height="100" viewBox="0 0 100 100"><use href="#th-wolf"></use></svg>
<div class="t" style="font-size: 16px; -webkit-text-stroke: 0.4px rgb(250, 250, 250); letter-spacing: 0.73px; left: 1413.7px; top: 456px;">Wolf of Afrika</div>
<div class="t" style="font-size: 12px; color: rgb(155, 155, 155); letter-spacing: 0.29px; left: 1413.7px; top: 489px;">Market Cap</div>
<div class="t" style="font-size: 12px; color: rgb(155, 155, 155); letter-spacing: 0.33px; left: 1494.8px; top: 489px;">24h Volume</div>
<div class="t" style="font-size: 14px; -webkit-text-stroke: 0.3px rgb(250, 250, 250); letter-spacing: 0.19px; left: 1413.7px; top: 508px;">$3.72K</div>
<div class="t" style="font-size: 14px; -webkit-text-stroke: 0.3px rgb(250, 250, 250); letter-spacing: 0.91px; left: 1494.8px; top: 508px;">$0</div>
<svg class="abs" style="left:1539.8px;top:444.3px;color:#fafafa" width="20" height="20" viewBox="0 0 24 24"><use href="#dots"></use></svg>
<div class="card" style="left:1592px;top:432px;width:296px;height:136px;border-radius:11px"></div>
<svg class="abs" style="left:1609px;top:449px;border-radius:5px;overflow:hidden" width="100" height="100" viewBox="0 0 100 100"><use href="#th-blank"></use></svg>
<div class="t" style="font-size: 16px; -webkit-text-stroke: 0.4px rgb(250, 250, 250); letter-spacing: 0.76px; left: 1724.7px; top: 456px;">Blood Moon</div>
<div class="t" style="font-size: 16px; -webkit-text-stroke: 0.4px rgb(250, 250, 250); letter-spacing: 0.53px; left: 1725.7px; top: 480px;">Coin</div>
<div class="t" style="font-size: 12px; color: rgb(155, 155, 155); letter-spacing: 0.29px; left: 1725.7px; top: 513px;">Market Cap</div>
<div class="t" style="font-size: 12px; color: rgb(155, 155, 155); letter-spacing: 0.33px; left: 1806.8px; top: 513px;">24h Volume</div>
<div class="t" style="font-size: 14px; -webkit-text-stroke: 0.3px rgb(250, 250, 250); letter-spacing: 0.19px; left: 1725.7px; top: 532px;">$3.72K</div>
<div class="t" style="font-size: 14px; -webkit-text-stroke: 0.3px rgb(250, 250, 250); letter-spacing: 0.91px; left: 1806.8px; top: 532px;">$0</div>
<svg class="abs" style="left:1851.8px;top:444.3px;color:#fafafa" width="20" height="20" viewBox="0 0 24 24"><use href="#dots"></use></svg>


<!-- explore -->
<div class="abs" style="left:31px;top:607px;width:115px;height:42px;border-radius:8px;background:#1c1c1c;border:1px solid #343434"></div>
<svg class="abs ico" style="left:48px;top:620px;color:#fafafa" width="16" height="16" viewBox="0 0 24 24"><circle cx="12" cy="12" r="10"></circle><path d="m16.24 7.76-1.804 5.411a2 2 0 0 1-1.265 1.265L7.76 16.240l1.804-5.411a2 2 0 0 1 1.265-1.265z"></path></svg>
<div class="t" style="font-size: 16px; -webkit-text-stroke: 0.4px rgb(250, 250, 250); letter-spacing: 0.46px; left: 71.8px; top: 621px;">Explore</div>
<div class="abs" style="left:152px;top:607px;width:115px;height:42px;border-radius:8px;border:1px solid #2a2a2a"></div>
<div class="abs" style="left:273px;top:607px;width:148px;height:42px;border-radius:8px;border:1px solid #2a2a2a"></div>
<div class="abs" style="left:427px;top:607px;width:86px;height:42px;border-radius:8px;border:1px solid #2a2a2a"></div>
<svg class="abs ico" style="left:169px;top:620px;color:#9b9b9b" width="16" height="16" viewBox="0 0 24 24"><path d="M9.937 15.500A2 2 0 0 0 8.500 14.063l-6.135-1.582a.5.5 0 0 1 0-.962L8.500 9.936A2 2 0 0 0 9.937 8.500l1.582-6.135a.5.5 0 0 1 .963 0L14.063 8.500A2 2 0 0 0 15.500 9.937l6.135 1.581a.5.5 0 0 1 0 .964L15.500 14.063a2 2 0 0 0-1.437 1.437l-1.582 6.135a.5.5 0 0 1-.963 0z"></path><path d="M20 3v4"></path><path d="M22 5h-4"></path><path d="M4 17v2"></path><path d="M5 18H3"></path></svg>
<div class="t" style="font-size: 16px; color: rgb(155, 155, 155); -webkit-text-stroke: 0.3px rgb(155, 155, 155); letter-spacing: 0.54px; left: 193.3px; top: 621px;">Newest</div>
<svg class="abs ico" style="left:289.9px;top:620px;color:#9b9b9b" width="16" height="16" viewBox="0 0 24 24"><use href="#clock"></use></svg>
<div class="t" style="font-size: 16px; color: rgb(155, 155, 155); -webkit-text-stroke: 0.3px rgb(155, 155, 155); letter-spacing: 0.58px; left: 313.8px; top: 621px;">Last Traded</div>
<svg class="abs ico" style="left:444.2px;top:619.8px;color:#9b9b9b" width="16" height="16" viewBox="0 0 24 24"><use href="#trend"></use></svg>
<div class="t" style="font-size: 16px; color: rgb(155, 155, 155); -webkit-text-stroke: 0.3px rgb(155, 155, 155); letter-spacing: 0.6px; left: 468.7px; top: 621px;">Top</div>
<div class="abs" style="left:1744px;top:607px;width:145px;height:42px;border-radius:8px;background:#1b1b1b;border:1px solid #2a2a2a"></div>
<svg class="abs" style="left:1760px;top:621.5px" width="10" height="13" viewBox="0 0 10 13"><rect x="1" y="1" width="7.6" height="11" fill="none" stroke="#e6e6e6" stroke-width="0.9"></rect><path d="M3.3 4.6c0-1 .7-1.5 1.55-1.500.9 0 1.500.55 1.500 1.300 0 1.100-1.500 1.200-1.500 2.600" fill="none" stroke="#e6e6e6" stroke-width="0.9"></path><rect x="4.35" y="8.400" width="1" height="1" fill="#e6e6e6"></rect></svg>
<div class="t" style="font-size: 14px; -webkit-text-stroke: 0.35px rgb(250, 250, 250); letter-spacing: 0.58px; left: 1777.4px; top: 621px;">Migrated Only</div>


<!-- coins -->
<div class="abs" style="left:31px;top:672px;width:453px;height:175.500px;border-radius:6px;background:#161616"></div>
<svg class="abs" style="left:52px;top:685px;border-radius:8px;overflow:hidden" width="150" height="150" viewBox="0 0 100 100"><use href="#th-ben"></use></svg>
<div class="t" style="font-size: 18px; -webkit-text-stroke: 0.4px rgb(250, 250, 250); letter-spacing: 0.54px; left: 225.5px; top: 697px;">Ben Busternak</div>
<div class="t" style="font-size: 16px; color: rgb(140, 140, 140); letter-spacing: -0.14px; left: 225.8px; top: 725px;">BUSTERNAK</div>
<div class="t" style="font-size: 12px; color: rgb(155, 155, 155); letter-spacing: -0.17px; left: 226.5px; top: 752px;">by</div>
<div class="t" style="font-size: 12px; color: rgb(155, 155, 155); letter-spacing: -0.01px; left: 246px; top: 752px;">@user1</div>
<div class="abs" style="left:299.2px;top:756px;width:4.2px;height:4.2px;border-radius:50%;background:#9b9b9b"></div>
<svg class="abs ico" style="left:315.1px;top:751.1px;color:#9b9b9b" width="14" height="14" viewBox="0 0 24 24"><use href="#clock"></use></svg>
<div class="t" style="font-size: 12px; color: rgb(155, 155, 155); letter-spacing: 0.35px; left: 335.4px; top: 752px;">24d ago</div>
<div class="t" style="font-size: 14px; color: rgb(155, 155, 155); letter-spacing: 0.46px; left: 225.5px; top: 783px;">Market Cap</div>
<div class="t" style="font-size: 14px; color: rgb(155, 155, 155); letter-spacing: 0.55px; left: 390.3px; top: 783px;">Vol 24h</div>
<div class="t" style="font-size: 14px; -webkit-text-stroke: 0.3px rgb(250, 250, 250); letter-spacing: 0.15px; left: 226.5px; top: 807px;">$3.72K</div>
<div class="t" style="font-size: 14px; -webkit-text-stroke: 0.3px rgb(250, 250, 250); letter-spacing: 0.91px; left: 390.3px; top: 807px;">$0</div>
<svg class="abs" style="left:520px;top:685px;border-radius:8px;overflow:hidden" width="150" height="150" viewBox="0 0 100 100"><use href="#th-pills"></use></svg>
<div class="t" style="font-size: 18px; -webkit-text-stroke: 0.4px rgb(250, 250, 250); letter-spacing: -0.25px; left: 693.5px; top: 697px;">P1lls</div>
<div class="t" style="font-size: 16px; color: rgb(140, 140, 140); letter-spacing: -0.42px; left: 693.8px; top: 725px;">P1LLS</div>
<div class="t" style="font-size: 12px; color: rgb(155, 155, 155); letter-spacing: -0.17px; left: 694.5px; top: 752px;">by</div>
<div class="t" style="font-size: 12px; color: rgb(155, 155, 155); letter-spacing: 0.53px; left: 714px; top: 752px;">@zoomtoken</div>
<div class="abs" style="left:799.7px;top:756px;width:4.2px;height:4.2px;border-radius:50%;background:#9b9b9b"></div>
<svg class="abs ico" style="left:815.6px;top:751.1px;color:#9b9b9b" width="14" height="14" viewBox="0 0 24 24"><use href="#clock"></use></svg>
<div class="t" style="font-size: 12px; color: rgb(155, 155, 155); letter-spacing: 0.38px; left: 835.9px; top: 752px;">20d ago</div>
<div class="t" style="font-size: 14px; color: rgb(155, 155, 155); letter-spacing: 0.46px; left: 693.5px; top: 783px;">Market Cap</div>
<div class="t" style="font-size: 14px; color: rgb(155, 155, 155); letter-spacing: 0.55px; left: 858.3px; top: 783px;">Vol 24h</div>
<div class="t" style="font-size: 14px; -webkit-text-stroke: 0.3px rgb(250, 250, 250); letter-spacing: 0.15px; left: 694.5px; top: 807px;">$3.74K</div>
<div class="t" style="font-size: 14px; -webkit-text-stroke: 0.3px rgb(250, 250, 250); letter-spacing: 0.91px; left: 858.3px; top: 807px;">$0</div>
<svg class="abs" style="left:988px;top:685px;border-radius:8px;overflow:hidden" width="150" height="150" viewBox="0 0 100 100"><use href="#th-bird"></use></svg>
<div class="t" style="font-size: 18px; -webkit-text-stroke: 0.4px rgb(250, 250, 250); letter-spacing: 0.59px; left: 1161.5px; top: 697px;">Erosion Bird</div>
<div class="t" style="font-size: 16px; color: rgb(140, 140, 140); letter-spacing: -0.26px; left: 1161.8px; top: 725px;">EROSION</div>
<div class="t" style="font-size: 12px; color: rgb(155, 155, 155); letter-spacing: -0.17px; left: 1162.5px; top: 752px;">by</div>
<div class="t" style="font-size: 12px; color: rgb(155, 155, 155); letter-spacing: 0.29px; left: 1182px; top: 752px;">@hodlnft179</div>
<div class="abs" style="left:1264.2px;top:756px;width:4.2px;height:4.2px;border-radius:50%;background:#9b9b9b"></div>
<svg class="abs ico" style="left:1280.1px;top:751.1px;color:#9b9b9b" width="14" height="14" viewBox="0 0 24 24"><use href="#clock"></use></svg>
<div class="t" style="font-size: 12px; color: rgb(155, 155, 155); letter-spacing: 0.05px; left: 1300.4px; top: 752px;">10d ago</div>
<div class="t" style="font-size: 14px; color: rgb(155, 155, 155); letter-spacing: 0.46px; left: 1161.5px; top: 783px;">Market Cap</div>
<div class="t" style="font-size: 14px; color: rgb(155, 155, 155); letter-spacing: 0.55px; left: 1326.3px; top: 783px;">Vol 24h</div>
<div class="t" style="font-size: 14px; -webkit-text-stroke: 0.3px rgb(250, 250, 250); letter-spacing: 0.15px; left: 1162.5px; top: 807px;">$3.72K</div>
<div class="t" style="font-size: 14px; -webkit-text-stroke: 0.3px rgb(250, 250, 250); letter-spacing: 0.91px; left: 1326.3px; top: 807px;">$0</div>
<svg class="abs" style="left:1456px;top:685px;border-radius:8px;overflow:hidden" width="150" height="150" viewBox="0 0 100 100"><use href="#th-banana"></use></svg>
<div class="t" style="font-size: 18px; -webkit-text-stroke: 0.4px rgb(250, 250, 250); letter-spacing: 0.54px; left: 1629.5px; top: 697px;">Banana Horse</div>
<div class="t" style="font-size: 16px; color: rgb(140, 140, 140); letter-spacing: -0.38px; left: 1629.8px; top: 725px;">HORSE</div>
<div class="t" style="font-size: 12px; color: rgb(155, 155, 155); letter-spacing: -0.17px; left: 1630.5px; top: 752px;">by</div>
<div class="t" style="font-size: 12px; color: rgb(155, 155, 155); letter-spacing: -0.01px; left: 1650px; top: 752px;">@user1</div>
<div class="abs" style="left:1703.2px;top:756px;width:4.2px;height:4.2px;border-radius:50%;background:#9b9b9b"></div>
<svg class="abs ico" style="left:1719.1px;top:751.1px;color:#9b9b9b" width="14" height="14" viewBox="0 0 24 24"><use href="#clock"></use></svg>
<div class="t" style="font-size: 12px; color: rgb(155, 155, 155); letter-spacing: 0.38px; left: 1739.4px; top: 752px;">22d ago</div>
<div class="t" style="font-size: 14px; color: rgb(155, 155, 155); letter-spacing: 0.46px; left: 1629.5px; top: 783px;">Market Cap</div>
<div class="t" style="font-size: 14px; color: rgb(155, 155, 155); letter-spacing: 0.55px; left: 1794.3px; top: 783px;">Vol 24h</div>
<div class="t" style="font-size: 14px; -webkit-text-stroke: 0.3px rgb(250, 250, 250); letter-spacing: 0.15px; left: 1630.5px; top: 807px;">$3.72K</div>
<div class="t" style="font-size: 14px; -webkit-text-stroke: 0.3px rgb(250, 250, 250); letter-spacing: 0.91px; left: 1794.3px; top: 807px;">$0</div>


<!-- cookie -->
<div class="abs" style="left:0;top:876px;width:1920px;height:117px;background:#181818;border-top:1px solid #2d2d2d"></div>
<div class="t" style="font-size: 16px; -webkit-text-stroke: 0.4px rgb(250, 250, 250); letter-spacing: 0.58px; left: 344.5px; top: 898px;">Cookie settings</div>
<div class="t" style="font-size: 14px; color: rgb(166, 166, 166); letter-spacing: 0.45px; left: 344.4px; top: 924px;">We use cookies to provide you with the best possible experience and analyze website performance.</div>
<svg class="abs" style="left:344px;top:959px" width="16" height="16" viewBox="0 0 16 16"><rect width="16" height="16" rx="3" fill="#4a4b50"></rect><path d="M4 8.300l2.700 2.600L12 5.200" fill="none" stroke="#77787d" stroke-width="1.700"></path></svg>
<div class="t" style="font-size: 14px; color: rgb(242, 242, 242); -webkit-text-stroke: 0.2px rgb(242, 242, 242); letter-spacing: 0.65px; left: 367.3px; top: 960px;">Necessary</div>
<svg class="abs" style="left:455px;top:959px" width="16" height="16" viewBox="0 0 16 16"><rect width="16" height="16" rx="2.500" fill="#1074fb"></rect><path d="M3.600 8.400l2.900 2.800L12.400 4.700" fill="none" stroke="#fff" stroke-width="2"></path></svg>
<svg class="abs" style="left:556px;top:959px" width="16" height="16" viewBox="0 0 16 16"><rect width="16" height="16" rx="2.500" fill="#1074fb"></rect><path d="M3.600 8.400l2.900 2.800L12.400 4.700" fill="none" stroke="#fff" stroke-width="2"></path></svg>
<div class="t" style="font-size: 14px; color: rgb(242, 242, 242); -webkit-text-stroke: 0.2px rgb(242, 242, 242); letter-spacing: 0.5px; left: 479.4px; top: 960px;">Analytics</div>
<div class="t" style="font-size: 14px; color: rgb(242, 242, 242); -webkit-text-stroke: 0.2px rgb(242, 242, 242); letter-spacing: 0.51px; left: 578.8px; top: 960px;">Preferences</div>
<div class="abs" style="left:1214px;top:898px;width:102px;height:38px;border-radius:8px;background:#1d9bf0"></div>
<div class="t" style="font-size: 15px; color: rgb(255, 255, 255); -webkit-text-stroke: 0.35px rgb(255, 255, 255); letter-spacing: 0.14px; left: 1230.9px; top: 910px;">Accept All</div>
<div class="abs" style="left:1324px;top:898px;width:148px;height:38px;border-radius:8px;border:1px solid #333"></div>
<div class="t" style="font-size: 15px; color: rgb(217, 217, 217); -webkit-text-stroke: 0.35px rgb(217, 217, 217); letter-spacing: 0.1px; left: 1341.7px; top: 910px;">Accept Selection</div>
<div class="abs" style="left:1480px;top:898px;width:96px;height:38px;border-radius:8px;border:1px solid #333"></div>
<div class="t" style="font-size: 15px; color: rgb(217, 217, 217); -webkit-text-stroke: 0.35px rgb(217, 217, 217); letter-spacing: -0.01px; left: 1495.9px; top: 910px;">Reject All</div>




</body></html>
